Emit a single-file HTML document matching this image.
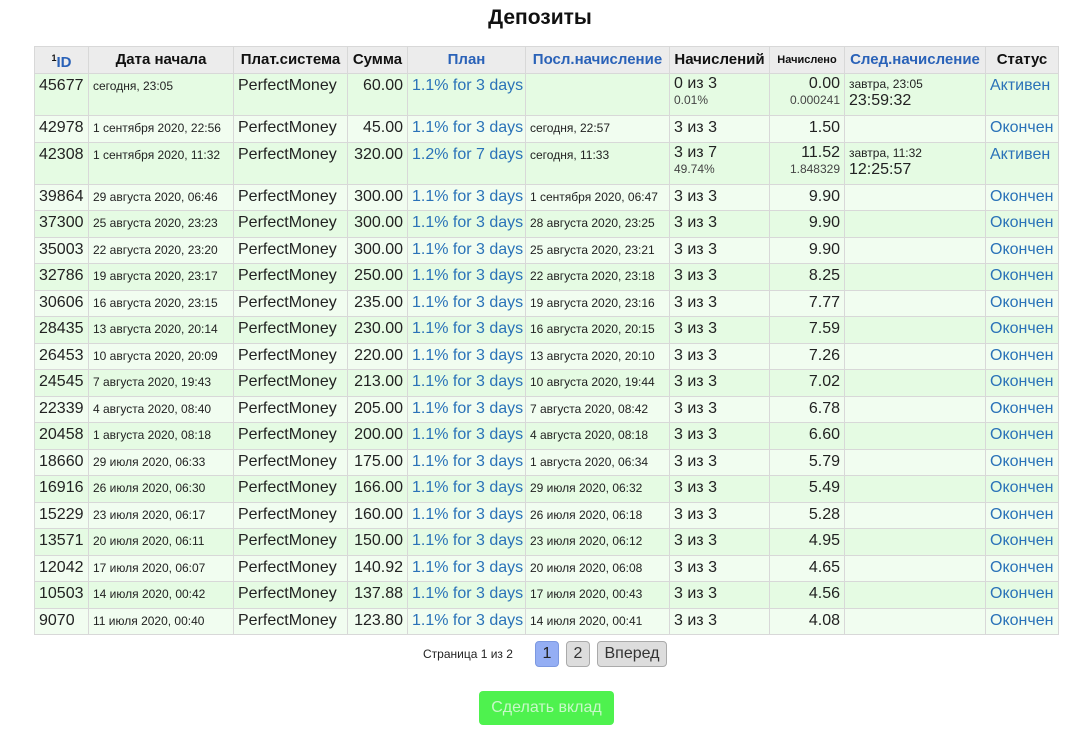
<!DOCTYPE html>
<html><head><meta charset="utf-8"><style>
body{margin:0;background:#fff;font-family:"Liberation Sans",Arial,sans-serif;color:#222;width:1080px;height:743px;overflow:hidden}
h1{margin:0;position:absolute;top:6px;left:0;width:1080px;text-align:center;font-size:21px;font-weight:bold;color:#111}
table{position:absolute;left:34px;top:46px;border-collapse:collapse;table-layout:fixed;width:1024px}
td,th{border:1px solid #d8d8d8;padding:0 4px;font-size:16px;white-space:nowrap;overflow:hidden;vertical-align:top;line-height:24px}
th{background:#ececec;height:25px;line-height:20px;font-size:15px;text-align:center;vertical-align:middle;color:#111;padding-top:0;padding-bottom:0}
th.b{color:#2a62b8}
tr.o td{background:#e5fbe3}
tr.e td{background:#f1fdf0}
tr td{height:25.5px}
tr.t td{height:41px}
.s{font-size:12px}
.r{text-align:right}
.l{color:#2a72b8}
.sm{font-size:12px;line-height:12px;display:block;color:#444}
.btn{position:absolute;border:1px solid #aaa;border-radius:4px;background:#ddd;font-size:16px;text-align:center;line-height:24px;height:24px;color:#333}
.go{position:absolute;left:479px;top:691px;width:135px;height:34px;background:#4ef24e;border-radius:4px;color:#c8f8c8;text-align:center;line-height:34px;font-size:16px}
</style></head><body>
<h1>Депозиты</h1>
<table>
<colgroup><col style="width:54px"><col style="width:145px"><col style="width:114px"><col style="width:60px"><col style="width:118px"><col style="width:144px"><col style="width:100px"><col style="width:75px"><col style="width:141px"><col style="width:73px"></colgroup>
<tr style="height:27px"><th class="b"><sup style="font-size:9px;color:#111">1</sup>ID</th><th>Дата начала</th><th>Плат.система</th><th>Сумма</th><th class="b">План</th><th class="b">Посл.начисление</th><th>Начислений</th><th style="font-size:11px">Начислено</th><th class="b">След.начисление</th><th>Статус</th></tr>
<tr class="o t"><td>45677</td><td class="s">сегодня, 23:05</td><td>PerfectMoney</td><td class="r">60.00</td><td class="l">1.1% for 3 days</td><td class="s"></td><td style="line-height:20px">0 из 3<span class="sm">0.01%</span></td><td class="r" style="line-height:20px">0.00<span class="sm">0.000241</span></td><td class="s" style="line-height:20px">завтра, 23:05<span style="display:block;font-size:16px;line-height:14px">23:59:32</span></td><td class="l">Активен</td></tr>
<tr class="e"><td>42978</td><td class="s">1 сентября 2020, 22:56</td><td>PerfectMoney</td><td class="r">45.00</td><td class="l">1.1% for 3 days</td><td class="s">сегодня, 22:57</td><td>3 из 3</td><td class="r">1.50</td><td></td><td class="l">Окончен</td></tr>
<tr class="o t"><td>42308</td><td class="s">1 сентября 2020, 11:32</td><td>PerfectMoney</td><td class="r">320.00</td><td class="l">1.2% for 7 days</td><td class="s">сегодня, 11:33</td><td style="line-height:20px">3 из 7<span class="sm">49.74%</span></td><td class="r" style="line-height:20px">11.52<span class="sm">1.848329</span></td><td class="s" style="line-height:20px">завтра, 11:32<span style="display:block;font-size:16px;line-height:14px">12:25:57</span></td><td class="l">Активен</td></tr>
<tr class="e"><td>39864</td><td class="s">29 августа 2020, 06:46</td><td>PerfectMoney</td><td class="r">300.00</td><td class="l">1.1% for 3 days</td><td class="s">1 сентября 2020, 06:47</td><td>3 из 3</td><td class="r">9.90</td><td></td><td class="l">Окончен</td></tr>
<tr class="o"><td>37300</td><td class="s">25 августа 2020, 23:23</td><td>PerfectMoney</td><td class="r">300.00</td><td class="l">1.1% for 3 days</td><td class="s">28 августа 2020, 23:25</td><td>3 из 3</td><td class="r">9.90</td><td></td><td class="l">Окончен</td></tr>
<tr class="e"><td>35003</td><td class="s">22 августа 2020, 23:20</td><td>PerfectMoney</td><td class="r">300.00</td><td class="l">1.1% for 3 days</td><td class="s">25 августа 2020, 23:21</td><td>3 из 3</td><td class="r">9.90</td><td></td><td class="l">Окончен</td></tr>
<tr class="o"><td>32786</td><td class="s">19 августа 2020, 23:17</td><td>PerfectMoney</td><td class="r">250.00</td><td class="l">1.1% for 3 days</td><td class="s">22 августа 2020, 23:18</td><td>3 из 3</td><td class="r">8.25</td><td></td><td class="l">Окончен</td></tr>
<tr class="e"><td>30606</td><td class="s">16 августа 2020, 23:15</td><td>PerfectMoney</td><td class="r">235.00</td><td class="l">1.1% for 3 days</td><td class="s">19 августа 2020, 23:16</td><td>3 из 3</td><td class="r">7.77</td><td></td><td class="l">Окончен</td></tr>
<tr class="o"><td>28435</td><td class="s">13 августа 2020, 20:14</td><td>PerfectMoney</td><td class="r">230.00</td><td class="l">1.1% for 3 days</td><td class="s">16 августа 2020, 20:15</td><td>3 из 3</td><td class="r">7.59</td><td></td><td class="l">Окончен</td></tr>
<tr class="e"><td>26453</td><td class="s">10 августа 2020, 20:09</td><td>PerfectMoney</td><td class="r">220.00</td><td class="l">1.1% for 3 days</td><td class="s">13 августа 2020, 20:10</td><td>3 из 3</td><td class="r">7.26</td><td></td><td class="l">Окончен</td></tr>
<tr class="o"><td>24545</td><td class="s">7 августа 2020, 19:43</td><td>PerfectMoney</td><td class="r">213.00</td><td class="l">1.1% for 3 days</td><td class="s">10 августа 2020, 19:44</td><td>3 из 3</td><td class="r">7.02</td><td></td><td class="l">Окончен</td></tr>
<tr class="e"><td>22339</td><td class="s">4 августа 2020, 08:40</td><td>PerfectMoney</td><td class="r">205.00</td><td class="l">1.1% for 3 days</td><td class="s">7 августа 2020, 08:42</td><td>3 из 3</td><td class="r">6.78</td><td></td><td class="l">Окончен</td></tr>
<tr class="o"><td>20458</td><td class="s">1 августа 2020, 08:18</td><td>PerfectMoney</td><td class="r">200.00</td><td class="l">1.1% for 3 days</td><td class="s">4 августа 2020, 08:18</td><td>3 из 3</td><td class="r">6.60</td><td></td><td class="l">Окончен</td></tr>
<tr class="e"><td>18660</td><td class="s">29 июля 2020, 06:33</td><td>PerfectMoney</td><td class="r">175.00</td><td class="l">1.1% for 3 days</td><td class="s">1 августа 2020, 06:34</td><td>3 из 3</td><td class="r">5.79</td><td></td><td class="l">Окончен</td></tr>
<tr class="o"><td>16916</td><td class="s">26 июля 2020, 06:30</td><td>PerfectMoney</td><td class="r">166.00</td><td class="l">1.1% for 3 days</td><td class="s">29 июля 2020, 06:32</td><td>3 из 3</td><td class="r">5.49</td><td></td><td class="l">Окончен</td></tr>
<tr class="e"><td>15229</td><td class="s">23 июля 2020, 06:17</td><td>PerfectMoney</td><td class="r">160.00</td><td class="l">1.1% for 3 days</td><td class="s">26 июля 2020, 06:18</td><td>3 из 3</td><td class="r">5.28</td><td></td><td class="l">Окончен</td></tr>
<tr class="o"><td>13571</td><td class="s">20 июля 2020, 06:11</td><td>PerfectMoney</td><td class="r">150.00</td><td class="l">1.1% for 3 days</td><td class="s">23 июля 2020, 06:12</td><td>3 из 3</td><td class="r">4.95</td><td></td><td class="l">Окончен</td></tr>
<tr class="e"><td>12042</td><td class="s">17 июля 2020, 06:07</td><td>PerfectMoney</td><td class="r">140.92</td><td class="l">1.1% for 3 days</td><td class="s">20 июля 2020, 06:08</td><td>3 из 3</td><td class="r">4.65</td><td></td><td class="l">Окончен</td></tr>
<tr class="o"><td>10503</td><td class="s">14 июля 2020, 00:42</td><td>PerfectMoney</td><td class="r">137.88</td><td class="l">1.1% for 3 days</td><td class="s">17 июля 2020, 00:43</td><td>3 из 3</td><td class="r">4.56</td><td></td><td class="l">Окончен</td></tr>
<tr class="e"><td>9070</td><td class="s">11 июля 2020, 00:40</td><td>PerfectMoney</td><td class="r">123.80</td><td class="l">1.1% for 3 days</td><td class="s">14 июля 2020, 00:41</td><td>3 из 3</td><td class="r">4.08</td><td></td><td class="l">Окончен</td></tr>
</table>
<div style="position:absolute;left:423px;top:647px;font-size:12px">Страница 1 из 2</div>
<div class="btn" style="left:535px;top:641px;width:22px;background:#94aef4;border-color:#7c98e0;color:#222">1</div>
<div class="btn" style="left:566px;top:641px;width:22px">2</div>
<div class="btn" style="left:597px;top:641px;width:68px">Вперед</div>
<div class="go">Сделать вклад</div>
</body></html>
